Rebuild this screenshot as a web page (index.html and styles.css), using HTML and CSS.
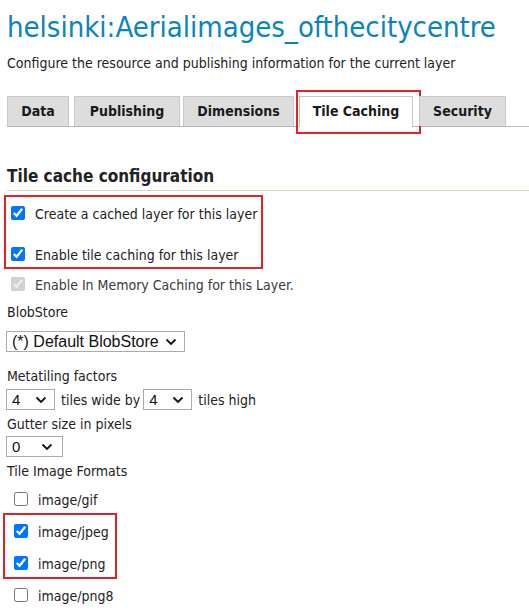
FILE: index.html
```html
<!DOCTYPE html>
<html>
<head>
<meta charset="utf-8">
<link rel="stylesheet" href="styles.css">
</head>
<body>
<div class="page">
  <h1 class="title">helsinki:Aerialimages_ofthecitycentre</h1>
  <p class="subtitle">Configure the resource and publishing information for the current layer</p>

  <ul class="tabs">
    <li class="tab tab-data">Data</li>
    <li class="tab tab-pub">Publishing</li>
    <li class="tab tab-dim">Dimensions</li>
    <li class="tab tab-tile active">Tile Caching<span class="mark"></span></li>
    <li class="tab tab-sec">Security</li>
  </ul>

  <h2 class="section">Tile cache configuration</h2>

  <div class="hl hl-top">
    <label class="check row1"><input type="checkbox" checked><span>Create a cached layer for this layer</span></label>
    <label class="check row2"><input type="checkbox" checked><span>Enable tile caching for this layer</span></label>
  </div>
  <label class="check row3"><input type="checkbox" checked disabled><span>Enable In Memory Caching for this Layer.</span></label>

  <div class="field-label blob-label">BlobStore</div>
  <div class="select select-blob"><span class="val">(*) Default BlobStore</span><svg class="chev" width="12" height="8" viewBox="0 0 12 8"><path d="M1.5 1.5 L6 6 L10.5 1.5" fill="none" stroke="#111" stroke-width="1.8"/></svg></div>

  <div class="field-label meta-label">Metatiling factors</div>
  <div class="meta-row">
    <div class="select select-small"><span class="val">4</span><svg class="chev" width="12" height="8" viewBox="0 0 12 8"><path d="M1.5 1.5 L6 6 L10.5 1.5" fill="none" stroke="#111" stroke-width="1.8"/></svg></div>
    <span class="inline-text">tiles wide by</span>
    <div class="select select-small"><span class="val">4</span><svg class="chev" width="12" height="8" viewBox="0 0 12 8"><path d="M1.5 1.5 L6 6 L10.5 1.5" fill="none" stroke="#111" stroke-width="1.8"/></svg></div>
    <span class="inline-text">tiles high</span>
  </div>

  <div class="field-label gutter-label">Gutter size in pixels</div>
  <div class="select select-gutter"><span class="val">0</span><svg class="chev" width="12" height="8" viewBox="0 0 12 8"><path d="M1.5 1.5 L6 6 L10.5 1.5" fill="none" stroke="#111" stroke-width="1.8"/></svg></div>

  <div class="field-label formats-label">Tile Image Formats</div>
  <div class="formats">
    <label class="check fmt fmt-gif"><input type="checkbox"><span>image/gif</span></label>
    <div class="hl hl-fmt">
      <label class="check fmt"><input type="checkbox" checked><span>image/jpeg</span></label>
      <label class="check fmt"><input type="checkbox" checked><span>image/png</span></label>
    </div>
    <label class="check fmt fmt-png8"><input type="checkbox"><span>image/png8</span></label>
  </div>
</div>
</body>
</html>
```

FILE: styles.css
```css
* { box-sizing: border-box; }
html, body { margin: 0; padding: 0; background: #fff; }
body {
  font-family: "DejaVu Sans Condensed", "DejaVu Sans", sans-serif;
  font-stretch: condensed;
  font-size: 14px;
  color: #222;
  overflow: hidden;
}
.page { padding: 0 0 0 7px; }

.title {
  margin: 0;
  padding-top: 10px;
  font-size: 29px;
  line-height: 34px;
  font-weight: normal;
  color: #0a84c1;
  white-space: nowrap;
}
.subtitle {
  margin: 10px 0 0;
  line-height: 18px;
}

.tabs {
  list-style: none;
  margin: 24px 0 0;
  padding: 0;
  display: flex;
  border-bottom: 1px solid #bbb;
  height: 31px;
}
.tab {
  position: relative;
  height: 30px;
  line-height: 29px;
  background: #ddd;
  border: 1px solid #c8c8c8;
  border-bottom: none;
  font-weight: bold;
  color: #1a1a1a;
  text-align: center;
}
.tab-data { width: 62px; margin-right: 5px; }
.tab-pub { width: 106px; margin-right: 3px; }
.tab-dim { width: 111px; margin-right: 5px; }
.tab-tile { width: 114px; margin-right: 6px; }
.tab-sec { width: 87px; }
.tab.active { background: #fff; height: 31px; }
.mark {
  position: absolute;
  left: -4px;
  right: -9px;
  top: -7px;
  bottom: -7px;
  border: 2px solid #e4202b;
}

.section {
  margin: 39px 0 0;
  font-size: 17px;
  line-height: 20px;
  font-weight: bold;
  color: #222;
  padding-bottom: 4px;
  border-bottom: 1px solid #cfd8b6;
}

.check {
  display: flex;
  align-items: center;
  height: 18px;
}
.check input {
  margin: 0 0 2px -1px;
  width: 14px;
  height: 14px;
  flex: none;
}
.check span { margin-left: 10px; }

.hl {
  border: 2px solid #e4202b;
  width: fit-content;
}
.hl-top {
  margin: 4px 0 0 -3px;
  padding: 8px 4px 3px 6px;
}
.hl-top .row2 { margin-top: 23px; }
.row3 { margin: 7px 0 0 5px; color: #3a3a3a; }

.field-label { line-height: 18px; }
.blob-label { margin-top: 9px; }

.select {
  position: relative;
  display: flex;
  align-items: center;
  height: 21px;
  border: 1px solid #aaa;
  background: #fff;
  font-family: "Liberation Sans", Arial, sans-serif;
  font-stretch: normal;
  color: #111;
  margin-left: -1px;
}
.select .chev { position: absolute; top: 6px; }
.select-blob {
  margin-top: 10px;
  width: 179px;
  font-size: 16px;
  padding-left: 5px;
}
.select-blob .chev { right: 7px; top: 6px; }
.meta-label { margin-top: 15px; }
.meta-row {
  display: flex;
  align-items: center;
  margin-top: 4px;
}
.select-small {
  width: 49px;
  font-size: 15px;
  padding-left: 5px;
}
.select-small .chev { right: 7px; }
.inline-text { margin: 0 4px 0 6px; }
.gutter-label { margin-top: 5px; }
.select-gutter {
  margin-top: 3px;
  width: 57px;
  font-size: 15px;
  padding-left: 5px;
}
.select-gutter .chev { right: 9px; }
.formats-label { margin-top: 5px; }

.formats { margin-top: 11px; }
.fmt { margin-left: 8px; }
.hl-fmt {
  margin: 4px 0 0 -4px;
  padding: 8px 6px 4px 10px;
}
.hl-fmt .fmt { margin-left: 0; }
.hl-fmt .fmt + .fmt { margin-top: 14px; }
.fmt-png8 { margin-top: 8px; }
```
